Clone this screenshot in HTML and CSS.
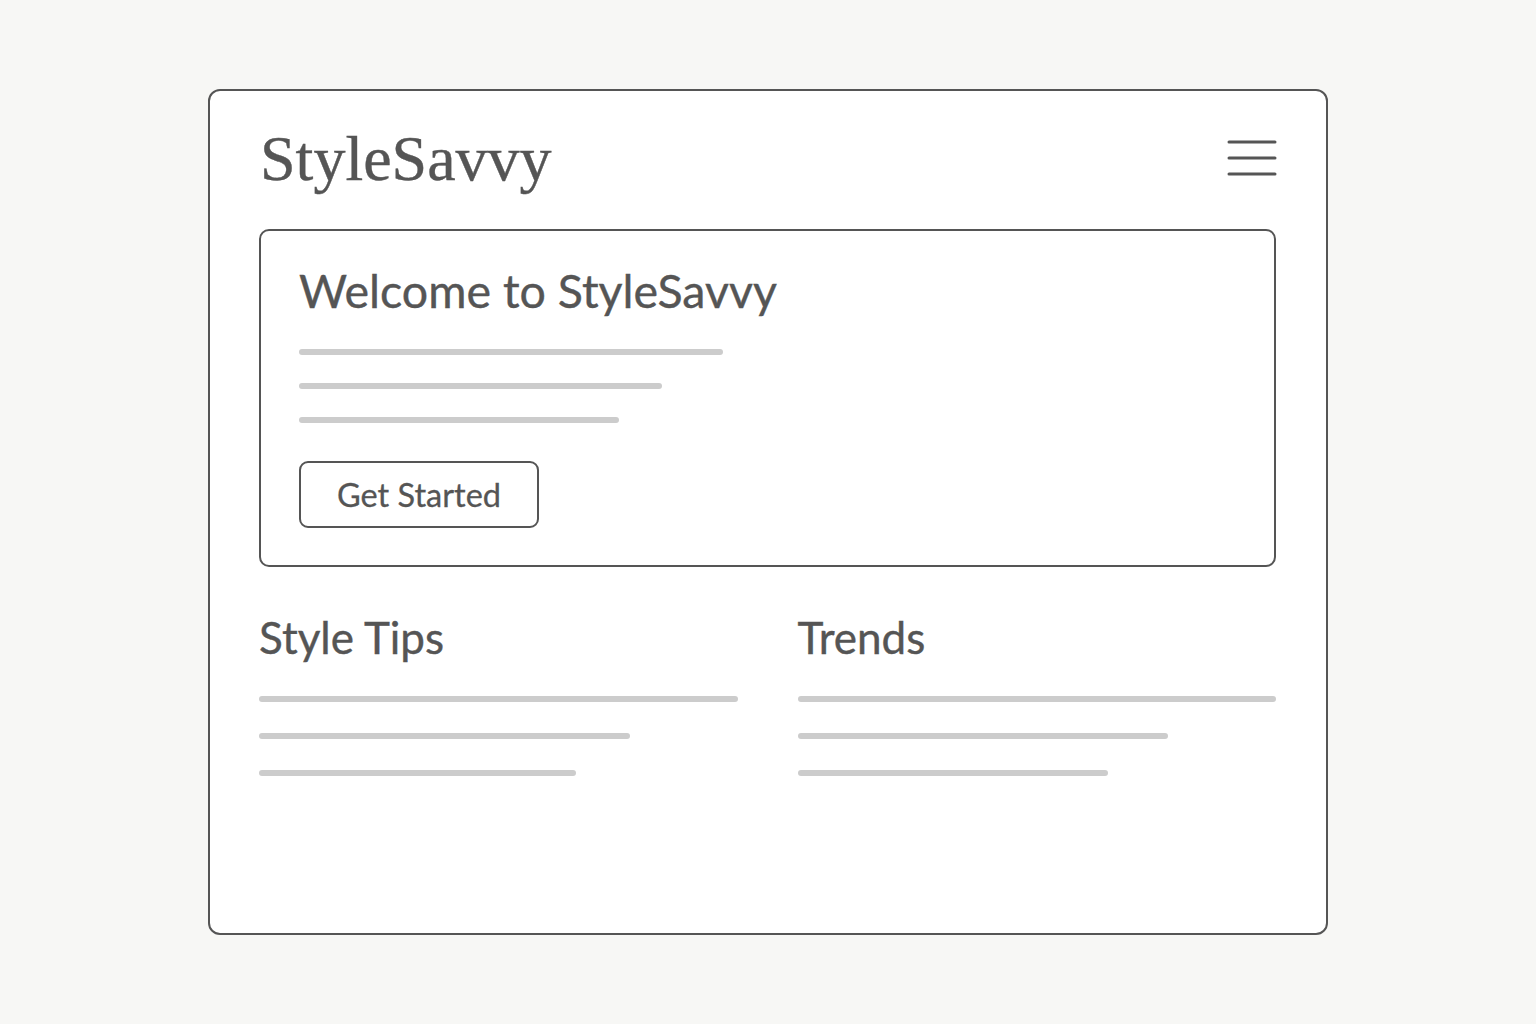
FILE: index.html
```html
<!DOCTYPE html>
<html lang="en">

<head>
    <meta charset="UTF-8">
    <meta name="viewport" content="width=device-width, initial-scale=1.0">
    <title>StyleSavvy</title>
    <link rel="stylesheet" href="styles.css">
</head>

<body>
    <div class="frame">
        <header class="top-bar">
            <h1 class="logo">StyleSavvy</h1>
            <button class="menu-btn" type="button" aria-label="Menu">
                <svg width="50" height="40" viewBox="0 0 50 40">
                    <line x1="2" y1="3" x2="48" y2="3" />
                    <line x1="2" y1="19" x2="48" y2="19" />
                    <line x1="2" y1="35" x2="48" y2="35" />
                </svg>
            </button>
        </header>

        <section class="hero">
            <h2>Welcome to StyleSavvy</h2>
            <div class="lines">
                <span class="line w-424"></span>
                <span class="line w-363"></span>
                <span class="line w-320"></span>
            </div>
            <button class="start-btn" type="button">Get Started</button>
        </section>

        <div class="columns">
            <section class="column">
                <h3>Style Tips</h3>
                <div class="lines">
                    <span class="line w-full"></span>
                    <span class="line w-371"></span>
                    <span class="line w-317"></span>
                </div>
            </section>
            <section class="column">
                <h3>Trends</h3>
                <div class="lines">
                    <span class="line w-full"></span>
                    <span class="line w-370"></span>
                    <span class="line w-310"></span>
                </div>
            </section>
        </div>
    </div>
</body>

</html>
```

FILE: styles.css
```css
body {
    font-family: 'Lato', 'Noto Sans', sans-serif;
    background-color: #f7f7f5; /* off-white page */
    color: #555;
    margin: 0;
    padding: 0;
    display: flex;
    justify-content: center;
    align-items: center;
    height: 100vh;
}

.frame {
    width: 1120px;
    height: 846px;
    box-sizing: border-box;
    background-color: #fff;
    border: 2px solid #555;
    border-radius: 12px;
    padding: 18px 50px 0 49px;
}

.top-bar {
    height: 100px;
    display: flex;
    justify-content: space-between;
    align-items: center;
}

.logo {
    font-family: 'Liberation Serif', 'DejaVu Serif', serif;
    font-size: 64px;
    font-weight: normal;
    margin: 0 0 0 1px;
    line-height: 1;
    -webkit-text-stroke: 0.4px #555;
}

.menu-btn {
    background: none;
    border: none;
    padding: 0;
    margin-right: -1px;
    display: flex;
}

.menu-btn line {
    stroke: #555;
    stroke-width: 3;
    stroke-linecap: round;
}

.hero {
    margin-top: 20px;
    border: 2px solid #555;
    border-radius: 10px;
    padding: 36px 38px 37px;
}

.hero h2 {
    font-size: 46.5px;
    font-weight: normal;
    line-height: 1;
    margin: 0 0 35px;
    -webkit-text-stroke: 0.4px #555;
}

.lines {
    display: flex;
    flex-direction: column;
    gap: 28px;
}

.line {
    display: block;
    height: 6px;
    border-radius: 3px;
    background-color: #ccc;
}

.w-full { width: 100%; }
.w-424 { width: 424px; }
.w-363 { width: 363px; }
.w-320 { width: 320px; }
.w-371 { width: 371px; }
.w-317 { width: 317px; }
.w-370 { width: 370px; }
.w-310 { width: 310px; }

.start-btn {
    margin-top: 38px;
    width: 240px;
    height: 67px;
    background-color: #fff;
    border: 2px solid #555;
    border-radius: 9px;
    font-family: inherit;
    font-size: 32.5px;
    color: #555;
    cursor: pointer;
    -webkit-text-stroke: 0.3px #555;
}

.columns {
    display: grid;
    grid-template-columns: 1fr 1fr;
    gap: 60px;
    margin-top: 48px;
}

.column h3 {
    font-size: 44px;
    font-weight: normal;
    line-height: 1;
    margin: 0 0 37px;
    -webkit-text-stroke: 0.4px #555;
}

.column .lines {
    gap: 31px;
}
```
